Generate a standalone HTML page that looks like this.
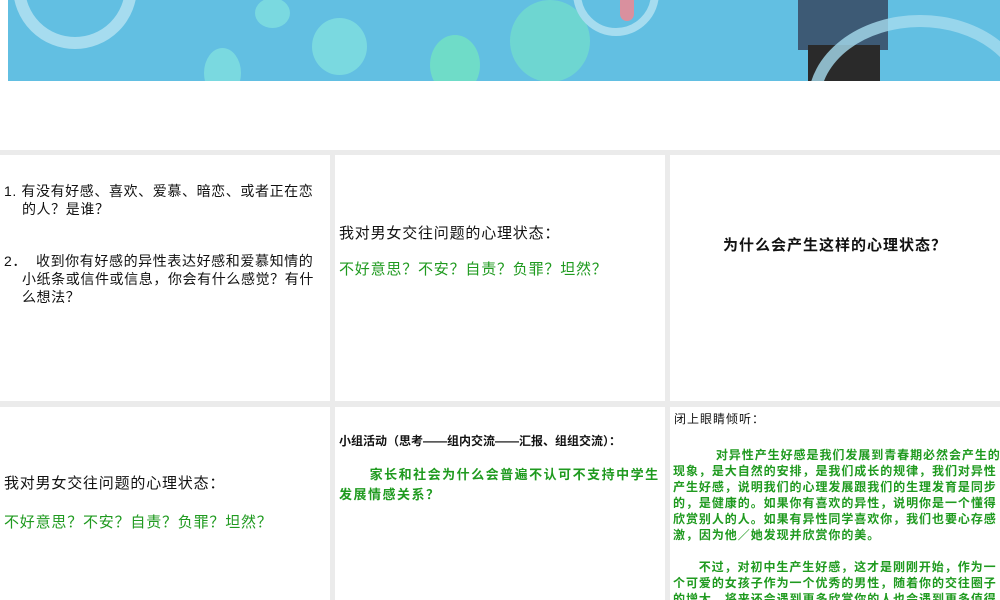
<!DOCTYPE html>
<html><head><meta charset="utf-8"><style>
body{margin:0;width:1000px;height:600px;overflow:hidden;background:#fff;font-family:"Liberation Sans","Noto Sans CJK SC",sans-serif;position:relative}
.ban{position:absolute;left:8px;top:0;width:992px;height:81px;background:#62bfe2;overflow:hidden}
.ban div{position:absolute}
.c{border-radius:50%}
.grid{position:absolute;left:0;top:150px;width:1000px;height:450px;background:#ebebeb}
.p{position:absolute;background:#fff;overflow:hidden;font-size:13px;color:#111}
.g{color:#1f9a1f}
.s{letter-spacing:0.8px;font-size:15px}
</style></head><body>
<div class="ban">
<div class="c" style="left:5px;top:-75px;width:100px;height:100px;border:12px solid #a6dcef"></div>
<div class="c" style="left:247px;top:-2px;width:35px;height:30px;background:#7ad9e0"></div>
<div class="c" style="left:304px;top:18px;width:55px;height:57px;background:#7ad9e0"></div>
<div class="c" style="left:196px;top:48px;width:37px;height:50px;background:#7ad9e0"></div>
<div class="c" style="left:422px;top:35px;width:50px;height:60px;background:#6fdcc8"></div>
<div class="c" style="left:502px;top:0px;width:80px;height:82px;background:#72dccd;opacity:.8"></div>
<div class="c" style="left:565px;top:-50px;width:70px;height:70px;border:8px solid #a6dcef"></div>
<div style="left:612px;top:-5px;width:14px;height:26px;background:#d9909e;border-radius:0 0 8px 8px"></div>
<div style="left:790px;top:0;width:90px;height:50px;background:#3d5a75"></div>
<div style="left:800px;top:45px;width:72px;height:36px;background:#2a2a2a"></div>
<div class="c" style="left:800px;top:15px;width:200px;height:150px;border:12px solid #a6dcef;opacity:.8"></div>
</div>
<div class="grid">
<div class="p" style="left:0;top:5px;width:330px;height:246px;font-size:14px;letter-spacing:0.6px">
<div style="position:absolute;left:4px;top:27px;width:326px;line-height:18px">1. 有没有好感、喜欢、爱慕、暗恋、或者正在恋<br>&nbsp;&nbsp;&nbsp;&nbsp;的人？是谁？</div>
<div style="position:absolute;left:4px;top:97px;width:326px;line-height:18px">2．&nbsp;&nbsp;收到你有好感的异性表达好感和爱慕知情的<br>&nbsp;&nbsp;&nbsp;&nbsp;小纸条或信件或信息，你会有什么感觉？有什<br>&nbsp;&nbsp;&nbsp;&nbsp;么想法？</div>
</div>
<div class="p s" style="left:335px;top:5px;width:330px;height:246px">
<div style="position:absolute;left:4px;top:67px">我对男女交往问题的心理状态：</div>
<div class="g" style="position:absolute;left:4px;top:103px">不好意思？不安？自责？负罪？坦然？</div>
</div>
<div class="p" style="left:670px;top:5px;width:330px;height:246px;font-size:15px;font-weight:bold;letter-spacing:1px">
<div style="position:absolute;left:0;width:330px;text-align:center;top:79px">为什么会产生这样的心理状态？</div>
</div>
<div class="p s" style="left:0;top:257px;width:330px;height:193px">
<div style="position:absolute;left:4px;top:65px">我对男女交往问题的心理状态：</div>
<div class="g" style="position:absolute;left:4px;top:104px">不好意思？不安？自责？负罪？坦然？</div>
</div>
<div class="p" style="left:335px;top:257px;width:330px;height:193px">
<div style="position:absolute;left:4px;top:25px;font-size:12px;font-weight:bold">小组活动（思考——组内交流——汇报、组组交流）：</div>
<div class="g" style="position:absolute;left:4px;top:58px;width:322px;font-weight:bold;line-height:20px;letter-spacing:1.5px">&nbsp;&nbsp;&nbsp;&nbsp;&nbsp;&nbsp;家长和社会为什么会普遍不认可不支持中学生发展情感关系？</div>
</div>
<div class="p" style="left:670px;top:257px;width:330px;height:193px">
<div style="position:absolute;left:4px;top:3px;font-size:12px;letter-spacing:1px">闭上眼睛倾听：</div>
<div class="g" style="position:absolute;left:3px;top:40px;width:330px;font-size:12px;font-weight:bold;line-height:16px;letter-spacing:0.95px">&nbsp;&nbsp;&nbsp;&nbsp;&nbsp;&nbsp;&nbsp;&nbsp;&nbsp;&nbsp;对异性产生好感是我们发展到青春期必然会产生的现象，是大自然的安排，是我们成长的规律，我们对异性产生好感，说明我们的心理发展跟我们的生理发育是同步的，是健康的。如果你有喜欢的异性，说明你是一个懂得欣赏别人的人。如果有异性同学喜欢你，我们也要心存感激，因为他／她发现并欣赏你的美。<br><br>&nbsp;&nbsp;&nbsp;&nbsp;&nbsp;&nbsp;不过，对初中生产生好感，这才是刚刚开始，作为一个可爱的女孩子作为一个优秀的男性，随着你的交往圈子的增大，将来还会遇到更多欣赏你的人也会遇到更多值得</div>
</div>
</div>
</body></html>
